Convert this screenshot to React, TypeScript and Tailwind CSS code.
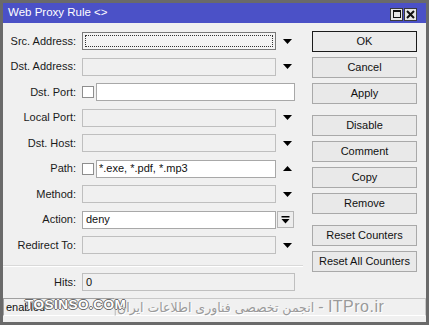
import React from "react";

const font = { fontFamily: '"Liberation Sans", Arial, sans-serif' };

function Down() {
  return (
    <svg width="9" height="5" viewBox="0 0 9 5">
      <polygon points="0,0 9,0 4.5,5" fill="#000" />
    </svg>
  );
}
function Up() {
  return (
    <svg width="9" height="5" viewBox="0 0 9 5">
      <polygon points="0,5 9,5 4.5,0" fill="#000" />
    </svg>
  );
}

function Label({ text }: { text: string }) {
  return <div className="w-[73px] shrink-0 text-right text-[11px] text-[#1a1a1a] leading-none">{text}</div>;
}

function Disabled({ w }: { w: string }) {
  return <div className={`${w} h-[18px] border border-[#bfbfbf] bg-[#f0f0f0]`} />;
}

function Row({ children }: { children: React.ReactNode }) {
  return <div className="flex h-[18px] items-center gap-[6px]">{children}</div>;
}

function Btn({ text, ok }: { text: string; ok?: boolean }) {
  return (
    <div
      className={`flex h-[21px] w-[105px] items-center justify-center border text-[11px] text-[#111] ${
        ok ? "border-[#1b1b1b] bg-[#ebebeb]" : "border-[#a9a9a9] bg-[#e9e9e9]"
      }`}
    >
      {text}
    </div>
  );
}

function Arrow({ up }: { up?: boolean }) {
  return <div className="flex h-[18px] w-[19px] items-center pl-[7px]">{up ? <Up /> : <Down />}</div>;
}

export default function App() {
  return (
    <div style={font} className="relative h-[325px] w-[429px] overflow-hidden border-[3px] border-[#6a6a6a] bg-[#f0f0f0]">
      {/* title */}
      <div className="flex h-[20px] items-center bg-[#4b51c7] pl-[5px] pr-[9px]">
        <span className="text-[11.5px] text-white">Web Proxy Rule &lt;&gt;</span>
        <div className="ml-auto mt-[2px] flex gap-[1px]">
          <div className="flex h-[13px] w-[13px] items-center justify-center border border-[#3a3a3a] bg-[#e6e6e6]">
            <div className="h-[8px] w-[8px] border border-t-2 border-[#111]" />
          </div>
          <div className="flex h-[13px] w-[13px] items-center justify-center border border-[#3a3a3a] bg-[#e6e6e6]">
            <svg width="9" height="9" viewBox="0 0 9 9">
              <path d="M1 1 L8 8 M8 1 L1 8" stroke="#111" strokeWidth="2" />
            </svg>
          </div>
        </div>
      </div>

      {/* body */}
      <div className="flex h-[273px]">
        <div className="flex w-[292px] flex-col pt-[9px]">
          <div className="flex flex-col gap-[7.5px]">
            <Row>
              <Label text="Src. Address:" />
              <div className="flex">
                <div className="h-[18px] w-[194px] border border-[#7a7a7a] bg-[#f3f3f3] p-[2px]">
                  <div className="h-full w-full border border-dotted border-[#333]" />
                </div>
                <Arrow />
              </div>
            </Row>
            <Row>
              <Label text="Dst. Address:" />
              <div className="flex">
                <Disabled w="w-[194px]" />
                <Arrow />
              </div>
            </Row>
            <Row>
              <Label text="Dst. Port:" />
              <div className="flex items-center gap-[2px]">
                <div className="h-[12px] w-[12px] border border-[#8e8e8e] bg-white" />
                <div className="h-[18px] w-[199px] border border-[#a8a8a8] bg-white" />
              </div>
            </Row>
            <Row>
              <Label text="Local Port:" />
              <div className="flex">
                <Disabled w="w-[194px]" />
                <Arrow />
              </div>
            </Row>
            <Row>
              <Label text="Dst. Host:" />
              <div className="flex">
                <Disabled w="w-[194px]" />
                <Arrow />
              </div>
            </Row>
            <Row>
              <Label text="Path:" />
              <div className="flex items-center gap-[2px]">
                <div className="h-[12px] w-[12px] border border-[#8e8e8e] bg-white" />
                <div className="flex h-[18px] w-[180px] items-center border border-[#a8a8a8] bg-white pl-[2px] text-[11px] text-[#111]">
                  *.exe, *.pdf, *.mp3
                </div>
                <div className="-ml-[2px]">
                  <Arrow up />
                </div>
              </div>
            </Row>
            <Row>
              <Label text="Method:" />
              <div className="flex">
                <Disabled w="w-[194px]" />
                <Arrow />
              </div>
            </Row>
            <Row>
              <Label text="Action:" />
              <div className="flex items-center">
                <div className="flex h-[18px] w-[194px] items-center border border-[#a8a8a8] bg-white pl-[3px] text-[11px] text-[#111]">
                  deny
                </div>
                <div className="ml-[1px] flex h-[17px] w-[17px] items-center justify-center border border-[#b5b5b5] bg-[#ededed]">
                  <svg width="9" height="9" viewBox="0 0 9 9">
                    <rect x="0.5" y="1" width="8" height="1.5" fill="#000" />
                    <polygon points="0.5,4 8.5,4 4.5,8.5" fill="#000" />
                  </svg>
                </div>
              </div>
            </Row>
            <Row>
              <Label text="Redirect To:" />
              <div className="flex">
                <Disabled w="w-[194px]" />
                <Arrow />
              </div>
            </Row>
          </div>
          <div className="mt-[11px] h-[2px] w-[300px] border-t border-b border-t-[#d9d9d9] border-b-white" />
          <div className="mt-[6px]">
            <Row>
              <Label text="Hits:" />
              <div className="flex h-[18px] w-[213px] items-center border border-[#bfbfbf] bg-[#f0f0f0] pl-[3px] text-[11px] text-[#111]">
                0
              </div>
            </Row>
          </div>
        </div>

        <div className="ml-[17px] flex w-[105px] flex-col pt-[8px]">
          <div className="flex flex-col gap-[5px]">
            <Btn text="OK" ok />
            <Btn text="Cancel" />
            <Btn text="Apply" />
          </div>
          <div className="mt-[11px] flex flex-col gap-[5px]">
            <Btn text="Disable" />
            <Btn text="Comment" />
            <Btn text="Copy" />
            <Btn text="Remove" />
          </div>
          <div className="mt-[11px] flex flex-col gap-[5px]">
            <Btn text="Reset Counters" />
            <Btn text="Reset All Counters" />
          </div>
        </div>
      </div>

      {/* status bar */}
      <div className="flex h-[26px] pt-[2px]">
        <div className="flex h-[18px] w-[112px] items-center border border-[#a0a0a0] border-r-[#e0e0e0] border-b-white pl-[2px] text-[11px] text-[#111]">
          enabled
        </div>
        <div className="h-[18px] flex-1 border border-[#c8c8c8] border-b-white" />
      </div>

      {/* watermark */}
      <div
        className="absolute left-[22px] top-[292px] text-[13.5px] font-bold tracking-[0.5px] text-white"
        style={{ textShadow: "1px 0 #6a6a6a, -1px 0 #6a6a6a, 0 1px #6a6a6a, 0 -1px #6a6a6a" }}
      >
        TOSINSO.COM
      </div>
      <div
        className="absolute left-[114px] top-[292px] whitespace-nowrap text-[12.5px] text-[#9a9a9a]"
        style={{ fontFamily: '"DejaVu Sans", "Liberation Sans", sans-serif', textShadow: "1px 1px #ffffff" }}
      >
        انجمن تخصصی فناوری اطلاعات ایران{" "}
        <span style={{ fontFamily: '"Liberation Sans", sans-serif' }} className="text-[16px] tracking-[0.5px]">
          - ITPro.ir
        </span>
      </div>
    </div>
  );
}
